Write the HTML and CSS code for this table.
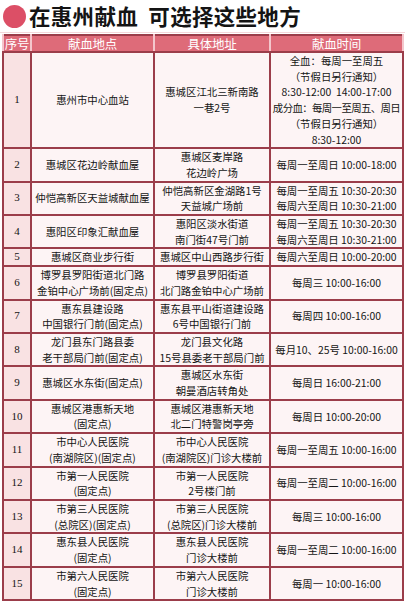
FILE: index.html
```html
<!DOCTYPE html>
<html lang="zh">
<head>
<meta charset="utf-8">
<link rel="stylesheet" href="styles.css">
</head>
<body>
<div class="title">
  <span class="dot"></span>
  <h1>在惠州献血&nbsp;&nbsp;可选择这些地方</h1>
</div>
<table class="tbl">
  <colgroup>
    <col class="c1"><col class="c2"><col class="c3"><col class="c4">
  </colgroup>
  <thead>
    <tr><th>序号</th><th>献血地点</th><th>具体地址</th><th>献血时间</th></tr>
  </thead>
  <tbody>
    <tr><td class="n">1</td><td>惠州市中心血站</td><td>惠城区江北三新南路<br>一巷2号</td><td>全血：每周一至周五<br>（节假日另行通知）<br>8:30-12:00&nbsp; 14:00-17:00<br><span class="tight">成分血：每周一至周五、周日</span><br>（节假日另行通知）<br>8:30-12:00</td></tr>
    <tr><td class="n">2</td><td>惠城区花边岭献血屋</td><td>惠城区麦岸路<br>花边岭广场</td><td>每周一至周日 10:00-18:00</td></tr>
    <tr><td class="n">3</td><td>仲恺高新区天益城献血屋</td><td>仲恺高新区金湖路1号<br>天益城广场前</td><td>每周一至周五 10:30-20:30<br>每周六至周日 10:30-21:00</td></tr>
    <tr><td class="n">4</td><td>惠阳区印象汇献血屋</td><td>惠阳区淡水街道<br>南门街47号门前</td><td>每周一至周五 10:30-20:30<br>每周六至周日 10:30-21:00</td></tr>
    <tr class="one"><td class="n">5</td><td>惠城区商业步行街</td><td>惠城区中山西路步行街</td><td>每周六至周日 10:00-20:00</td></tr>
    <tr><td class="n">6</td><td>博罗县罗阳街道北门路<br>金铂中心广场前(固定点)</td><td>博罗县罗阳街道<br>北门路金铂中心广场前</td><td>每周三 10:00-16:00</td></tr>
    <tr><td class="n">7</td><td>惠东县建设路<br>中国银行门前(固定点)</td><td>惠东县平山街道建设路<br>6号中国银行门前</td><td>每周四 10:00-16:00</td></tr>
    <tr><td class="n">8</td><td>龙门县东门路县委<br>老干部局门前(固定点)</td><td>龙门县文化路<br>15号县委老干部局门前</td><td>每月10、25号 10:00-16:00</td></tr>
    <tr><td class="n">9</td><td>惠城区水东街(固定点)</td><td>惠城区水东街<br>朝曼酒店转角处</td><td>每周日 16:00-21:00</td></tr>
    <tr><td class="n">10</td><td>惠城区港惠新天地<br>(固定点)</td><td>惠城区港惠新天地<br>北二门特警岗亭旁</td><td>每周日 10:00-20:00</td></tr>
    <tr><td class="n">11</td><td>市中心人民医院<br>(南湖院区)(固定点)</td><td>市中心人民医院<br>(南湖院区)门诊大楼前</td><td>每周一至周五 10:00-16:00</td></tr>
    <tr><td class="n">12</td><td>市第一人民医院<br>(固定点)</td><td>市第一人民医院<br>2号楼门前</td><td>每周一至周二 10:00-16:00</td></tr>
    <tr><td class="n">13</td><td>市第三人民医院<br>(总院区)(固定点)</td><td>市第三人民医院<br>(总院区)门诊大楼前</td><td>每周三 10:00-16:00</td></tr>
    <tr><td class="n">14</td><td>惠东县人民医院<br>(固定点)</td><td>惠东县人民医院<br>门诊大楼前</td><td>每周一至周二 10:00-16:00</td></tr>
    <tr><td class="n">15</td><td>市第六人民医院<br>(固定点)</td><td>市第六人民医院<br>门诊大楼前</td><td>每周一 10:00-16:00</td></tr>
  </tbody>
</table>
</body>
</html>
```

FILE: styles.css
```css
html, body {
  margin: 0;
  padding: 0;
  background: #ffffff;
  overflow: hidden;
}
body {
  width: 405px;
  height: 602px;
  font-family: "Noto Sans CJK SC", "Noto Sans", sans-serif;
}
.title {
  display: flex;
  align-items: center;
  height: 33px;
  padding-left: 3px;
  border-bottom: 1px solid #f4d7da;
  box-sizing: border-box;
}
.dot {
  width: 23px;
  height: 23px;
  border-radius: 50%;
  background: #dc4f66;
  flex: none;
  margin-right: 3px;
}
.title h1 {
  margin: 0;
  font-size: 21.5px;
  font-weight: 700;
  color: #141414;
  line-height: 1;
  letter-spacing: 0.3px;
}
.tbl {
  margin: 1px 0 0 2px;
  width: 400px;
  border-collapse: collapse;
  table-layout: fixed;
  border: 2px solid #9b3d4a;
}
.c1 { width: 28px; }
.c2 { width: 123px; }
.c3 { width: 116px; }
.c4 { width: 133px; }
.tbl th {
  background: #de6b79;
  color: #ffffff;
  font-weight: 400;
  font-size: 12.5px;
  height: 15px;
  line-height: 15px;
  padding: 0;
  border-style: solid;
  border-color: #f4c6cc #f4c6cc #9b3d4a #f4c6cc;
  border-width: 0 2px 2px 2px;
  letter-spacing: -0.3px;
}
.tbl td {
  background: #fdf4f5;
  border: 2px solid #9b3d4a;
  padding: 0;
  text-align: center;
  vertical-align: middle;
  font-size: 10.4px;
  line-height: 15.7px;
  color: #141414;
  white-space: nowrap;
  overflow: hidden;
}
.tbl tbody tr.one { height: 17px; }
.tbl td.n {
  background: #f9e2e3;
  font-family: "Liberation Serif", serif;
  font-size: 11px;
}
.tight { letter-spacing: -0.6px; }
```
